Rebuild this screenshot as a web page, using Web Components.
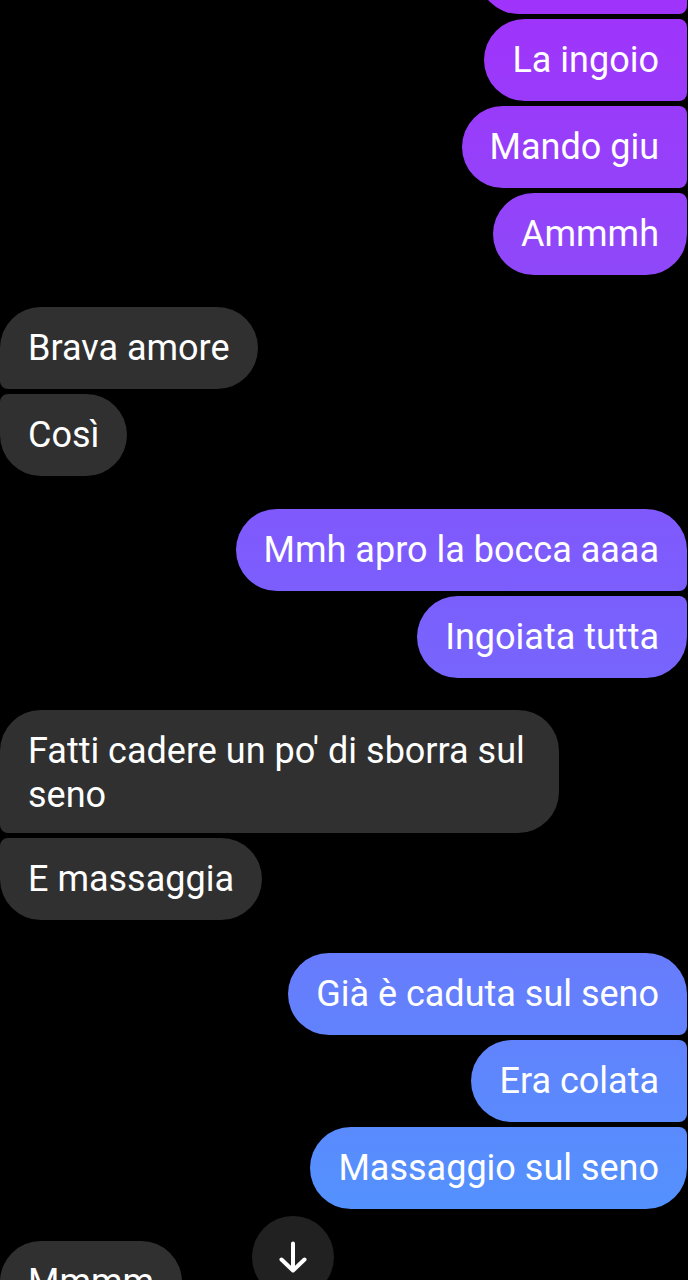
<!DOCTYPE html>
<html lang="it">
<head>
  <meta charset="utf-8">
  <meta name="viewport" content="width=device-width, initial-scale=1">
  <title>Chat</title>
  <style>
    body {
      margin: 0;
      background: #000;
      color: #fff;
      font-family: Roboto, "Liberation Sans", sans-serif;
    }
  </style>
</head>
<body>
  <chat-thread>
    <message-group from="me">
      <chat-bubble class="cut"></chat-bubble>
      <chat-bubble>La ingoio</chat-bubble>
      <chat-bubble>Mando giu</chat-bubble>
      <chat-bubble>Ammmh</chat-bubble>
    </message-group>
    <message-group from="other">
      <chat-bubble>Brava amore</chat-bubble>
      <chat-bubble>Così</chat-bubble>
    </message-group>
    <message-group from="me">
      <chat-bubble>Mmh apro la bocca aaaa</chat-bubble>
      <chat-bubble>Ingoiata tutta</chat-bubble>
    </message-group>
    <message-group from="other">
      <chat-bubble>Fatti cadere un po' di sborra sul seno</chat-bubble>
      <chat-bubble>E massaggia</chat-bubble>
    </message-group>
    <message-group from="me">
      <chat-bubble>Già è caduta sul seno</chat-bubble>
      <chat-bubble>Era colata</chat-bubble>
      <chat-bubble>Massaggio sul seno</chat-bubble>
    </message-group>
    <message-group from="other">
      <chat-bubble>Mmmm</chat-bubble>
    </message-group>
    <scroll-button slot="overlay"></scroll-button>
  </chat-thread>

  <script>
    const threadTemplate = document.createElement('template');
    threadTemplate.innerHTML = `
      <style>
        :host {
          display: block;
          position: relative;
          height: 100vh;
          overflow: hidden;
        }
        /* the thread is scrolled partway through its first message */
        .list {
          display: flex;
          flex-direction: column;
          margin-top: -68px;
        }
      </style>
      <div class="list"><slot></slot></div>
      <slot name="overlay"></slot>
    `;

    class ChatThread extends HTMLElement {
      constructor() {
        super();
        this.attachShadow({ mode: 'open' });
        this.shadowRoot.appendChild(threadTemplate.content.cloneNode(true));
      }
    }

    const groupTemplate = document.createElement('template');
    groupTemplate.innerHTML = `
      <style>
        :host {
          display: flex;
          flex-direction: column;
          align-items: flex-start;
          gap: 5px;
          margin-top: 32px;
          --bubble: #303030;
        }
        :host(:first-child) {
          margin-top: 0;
        }
        :host([from="me"]) {
          align-items: flex-end;
          padding: 0 1px 0 0;
          --bubble: linear-gradient(#a033fb 0, #8f48f9 21%, #7c5dfd 45%, #677cfc 75%, #4e98ff 100%) fixed;
        }
        :host([from="me"]:not(:first-child)) {
          margin-top: 33px;
        }
        /* corners on the sender's side are tight between neighbours */
        :host([from="me"]) ::slotted(:not(:first-child)) {
          border-top-right-radius: 8px;
        }
        :host([from="me"]) ::slotted(:not(:last-child)) {
          border-bottom-right-radius: 8px;
        }
        :host([from="other"]) ::slotted(:not(:first-child)) {
          border-top-left-radius: 8px;
        }
        :host([from="other"]) ::slotted(:not(:last-child)) {
          border-bottom-left-radius: 8px;
        }
        ::slotted(.cut) {
          width: 209px;
        }
      </style>
      <slot></slot>
    `;

    class MessageGroup extends HTMLElement {
      constructor() {
        super();
        this.attachShadow({ mode: 'open' });
        this.shadowRoot.appendChild(groupTemplate.content.cloneNode(true));
      }
    }

    const bubbleTemplate = document.createElement('template');
    bubbleTemplate.innerHTML = `
      <style>
        :host {
          display: block;
          box-sizing: border-box;
          min-height: 82px;
          max-width: 559px;
          padding: 19px 28px 16px;
          border-radius: 41px;
          background: var(--bubble);
          font-size: 36px;
          line-height: 44px;
        }
      </style>
      <slot></slot>
    `;

    class ChatBubble extends HTMLElement {
      constructor() {
        super();
        this.attachShadow({ mode: 'open' });
        this.shadowRoot.appendChild(bubbleTemplate.content.cloneNode(true));
      }
    }

    const scrollTemplate = document.createElement('template');
    scrollTemplate.innerHTML = `
      <style>
        :host {
          display: block;
          position: absolute;
          left: 252px;
          bottom: -18px;
        }
        button {
          display: flex;
          align-items: center;
          justify-content: center;
          width: 82px;
          height: 82px;
          padding: 0;
          border: 0;
          border-radius: 50%;
          background: #212121;
          color: #fff;
        }
      </style>
      <button type="button" aria-label="Vai in fondo">
        <svg width="40" height="40" viewBox="0 0 40 40" fill="none" stroke="currentColor"
          stroke-width="4" stroke-linecap="round" stroke-linejoin="round">
          <path d="M20 6.5V33M8.5 22.5L20 33.5L31.5 22.5" />
        </svg>
      </button>
    `;

    class ScrollButton extends HTMLElement {
      constructor() {
        super();
        this.attachShadow({ mode: 'open' });
        this.shadowRoot.appendChild(scrollTemplate.content.cloneNode(true));
        this.button = this.shadowRoot.querySelector('button');
      }

      connectedCallback() {
        this.button.addEventListener('click', () => {
          const thread = this.closest('chat-thread');
          thread.scrollTop = thread.scrollHeight;
        });
      }
    }

    window.customElements.define('chat-thread', ChatThread);
    window.customElements.define('message-group', MessageGroup);
    window.customElements.define('chat-bubble', ChatBubble);
    window.customElements.define('scroll-button', ScrollButton);
  </script>
</body>
</html>
